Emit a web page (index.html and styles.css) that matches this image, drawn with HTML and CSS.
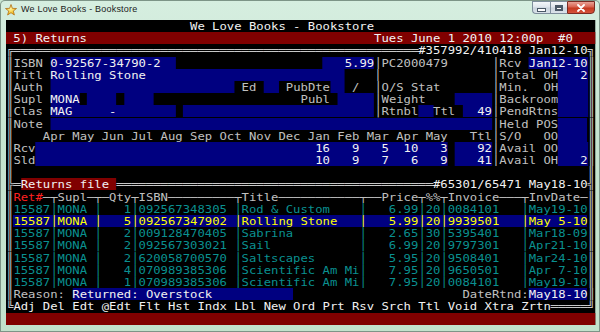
FILE: index.html
```html
<!DOCTYPE html>
<html lang="en">
<head>
    <meta charset="UTF-8">
    <title>We Love Books - Bookstore</title>
    <link rel="stylesheet" href="styles.css">
</head>
<body>
<div class="window">
    <div class="titlebar">
        <svg class="app-icon" viewBox="0 0 12 12">
            <defs>
                <radialGradient id="starfill" cx="0.45" cy="0.4" r="0.6">
                    <stop offset="0" stop-color="#fff3a0"/>
                    <stop offset="1" stop-color="#f2b400"/>
                </radialGradient>
            </defs>
            <polygon points="6,0.5 7.41,4.36 11.52,4.51 8.28,7.04 9.41,10.99 6,8.7 2.59,10.99 3.72,7.04 0.48,4.51 4.59,4.36" fill="url(#starfill)" stroke="#b0701a" stroke-width="0.8" stroke-linejoin="round"/>
        </svg>
        <div class="title">We Love Books - Bookstore</div>
        <div class="controls">
            <div class="btn btn-min"><span class="min-glyph"></span></div>
            <div class="btn btn-max"><span class="max-glyph"></span></div>
            <div class="btn btn-close">
                <svg viewBox="0 0 10 8" class="close-glyph"><path d="M2 1 L8 7 M8 1 L2 7" stroke="#fff" stroke-width="1.8" stroke-linecap="round"/></svg>
            </div>
        </div>
    </div>
    <div class="client">
        <div class="term">
<div class="row t-w">                         We Love Books - Bookstore</div>
<div class="row bg-r t-w"> 5) Returns                                       Tues June 1 2010 12:00p  #0</div>
<div class="row"><span class="ln">╔═══════════════════════════════════════════════════════</span><span class="t-w">#357992/410418 Jan12-10</span><span class="ln">╗</span></div>
<div class="row"><span class="ln">║</span>ISBN <span class="f">0-92567-34790-2  </span>                    <span class="f">   5.99</span><span class="ln">│</span>PC2000479      <span class="ln">│</span>Rcv <span class="f">Jan12-10</span><span class="ln">║</span></div>
<div class="row"><span class="ln">║</span>Titl <span class="f">Rolling Stone                           </span>    <span class="ln">│</span>               <span class="ln">│</span>Total OH<span class="f">   2</span><span class="ln">║</span></div>
<div class="row"><span class="ln">║</span>Auth <span class="f">                         </span> Ed <span class="f">  </span> PubDte<span class="f">  </span> /  <span class="ln">│</span>O/S Stat       <span class="ln">│</span>Min.  OH<span class="f">    </span><span class="ln">║</span></div>
<div class="row"><span class="ln">║</span>Supl <span class="f">MONA</span> <span class="f">    </span> <span class="f">    </span>                    Publ <span class="f">     </span><span class="ln">│</span>Weight    <span class="f">     </span><span class="ln">│</span>Backroom<span class="f">    </span><span class="ln">║</span></div>
<div class="row"><span class="ln">║</span>Clas <span class="f">MAG     -        </span> <span class="f">                          </span><span class="ln">│</span>Rtnbl<span class="f">  </span>Ttl <span class="f">  49</span><span class="ln">│</span>PendRtns<span class="f">    </span><span class="ln">║</span></div>
<div class="row"><span class="ln">║</span>Note <span class="f">                                                            </span><span class="ln">│</span>Held POS<span class="f">    </span><span class="ln">║</span></div>
<div class="row"><span class="ln">║</span>    Apr May Jun Jul Aug Sep Oct Nov Dec Jan Feb Mar Apr May   Ttl<span class="ln">│</span>S/O   OO<span class="f">    </span><span class="ln">║</span></div>
<div class="row"><span class="ln">║</span>Rcv<span class="f">                                      16   9   5  10   3</span> <span class="f">   92</span><span class="ln">│</span>Avail OO<span class="f">    </span><span class="ln">║</span></div>
<div class="row"><span class="ln">║</span>Sld<span class="f">                                      10   9   7   6   9</span> <span class="f">   41</span><span class="ln">│</span>Avail OH<span class="f">   2</span><span class="ln">║</span></div>
<div class="row"><span class="ln">║                                                                              ║</span></div>
<div class="row ln">╠═<span class="lab">Returns file </span>═══════════════════════════════════════════<span class="t-w">#65301/65471 May18-10</span>╣</div>
<div class="row"><span class="ln">║</span><span class="t-red">Ret#</span>─┬Supl─┬─Qty┬ISBN─────────┬Title───────────┬──Price┬%%┬Invoice───┬InvDate─<span class="ln">║</span></div>
<div class="row"><span class="ln">║</span><span class="c">15587│MONA │   1│092567348305 │Rod &amp; Custom    │   6.99│20│0084101   │May19-10</span><span class="ln">║</span></div>
<div class="row"><span class="ln">║</span><span class="sel">15587│MONA │   5│092567347902 │Rolling Stone   │   5.99│20│9939501   │May 5-10</span><span class="ln">║</span></div>
<div class="row"><span class="ln">║</span><span class="c">15587│MONA │   2│009128470405 │Sabrina         │   2.65│30│5395401   │Mar18-09</span><span class="ln">║</span></div>
<div class="row"><span class="ln">║</span><span class="c">15587│MONA │   2│092567303021 │Sail            │   6.99│20│9797301   │Apr21-10</span><span class="ln">║</span></div>
<div class="row"><span class="ln">║</span><span class="c">15587│MONA │   2│620058700570 │Saltscapes      │   5.95│20│9508401   │Mar24-10</span><span class="ln">║</span></div>
<div class="row"><span class="ln">║</span><span class="c">15587│MONA │   4│070989385306 │Scientific Am Mi│   7.95│20│9650501   │Apr 7-10</span><span class="ln">║</span></div>
<div class="row"><span class="ln">║</span><span class="c">15587│MONA │   1│070989385306 │Scientific Am Mi│   7.95│20│0084101   │May19-10</span><span class="ln">║</span></div>
<div class="row"><span class="ln">║</span>Reason: <span class="f">Returned: Overstock           </span>                       DateRtnd:<span class="f">May18-10</span><span class="ln">║</span></div>
<div class="row"><span class="ln">╚</span><span class="t-w">Adj Del Edt @Edt Flt Hst Indx Lbl New Ord Prt Rsv Srch Ttl Void Xtra Zrtn</span><span class="ln">═════╝</span></div>
<div class="row bg-r"></div>
        </div>
    </div>
</div>
</body>
</html>
```

FILE: styles.css
```css
* {
    margin: 0;
    padding: 0;
    box-sizing: border-box;
}
body {
    width: 600px;
    height: 332px;
    overflow: hidden;
    font-family: 'Liberation Sans', Arial, sans-serif;
    background: #c8e6d2;
}
.window {
    width: 600px;
    height: 332px;
    display: flex;
    flex-direction: column;
    background: linear-gradient(180deg, #d6eee0 0%, #c6e4d0 40%, #c2e1cc 100%);
    box-shadow: inset 0 0 0 1px #7d9487;
    border-radius: 5px 5px 0 0;
}
.titlebar {
    height: 20px;
    display: flex;
    align-items: flex-start;
    padding-left: 5px;
}
.app-icon {
    width: 12px;
    height: 12px;
    margin-top: 4px;
    flex-shrink: 0;
}
.title {
    margin-left: 4px;
    font-size: 9px;
    line-height: 18px;
    color: #1c1c1c;
    letter-spacing: 0.2px;
}
.controls {
    margin-left: auto;
    margin-right: 5px;
    margin-top: 1px;
    display: flex;
}
.btn {
    height: 13px;
    border: 1px solid #7e8e9c;
    display: flex;
    align-items: center;
    justify-content: center;
    background: linear-gradient(180deg, #f4f7fa 0%, #dde4eb 48%, #c9d3dd 52%, #dbe3ea 100%);
}
.btn-min {
    width: 18px;
    border-radius: 0 0 0 4px;
    border-right: none;
}
.btn-max {
    width: 17px;
    border-right: none;
}
.btn-close {
    width: 28px;
    border-color: #7a2b22;
    border-radius: 0 0 4px 0;
    background: linear-gradient(180deg, #e8a295 0%, #d9634f 45%, #c4391f 55%, #d5533a 100%);
}
.min-glyph {
    width: 7px;
    height: 2px;
    margin-top: 5px;
    background: #fff;
    box-shadow: 0 0 0 1px #4a5866;
}
.max-glyph {
    width: 8px;
    height: 6px;
    border: 1px solid #4a5866;
    border-top-width: 2px;
    background: #fff;
    box-shadow: inset 0 0 0 1px #4a5866;
}
.close-glyph {
    width: 10px;
    height: 8px;
}
.client {
    flex: 1;
    padding: 0 0 7px 5.5px;
}
/* 80x25 text screen; the font is stretched sideways to fill the wide cells */
.term {
    width: 503.3px;
    height: 305px;
    background: #000;
    font-family: 'DejaVu Sans Mono', monospace;
    font-size: 10.45px;
    color: #c0c0c0;
    transform: scaleX(1.1715);
    transform-origin: 0 0;
}
.row {
    height: 12.2px;
    line-height: 12.2px;
    white-space: pre;
    overflow: hidden;
}
.bg-r {
    background: #800000;
}
.t-w {
    color: #f2f2f2;
}
.t-red {
    color: #ff2020;
}
.ln {
    color: #c8c8c8;
}
.f {
    background: #000080;
    color: #f2f2f2;
}
.lab {
    background: #800000;
    color: #f2f2f2;
}
.c {
    color: #0a9090;
}
.sel {
    background: #000080;
    color: #ffff00;
}
```
